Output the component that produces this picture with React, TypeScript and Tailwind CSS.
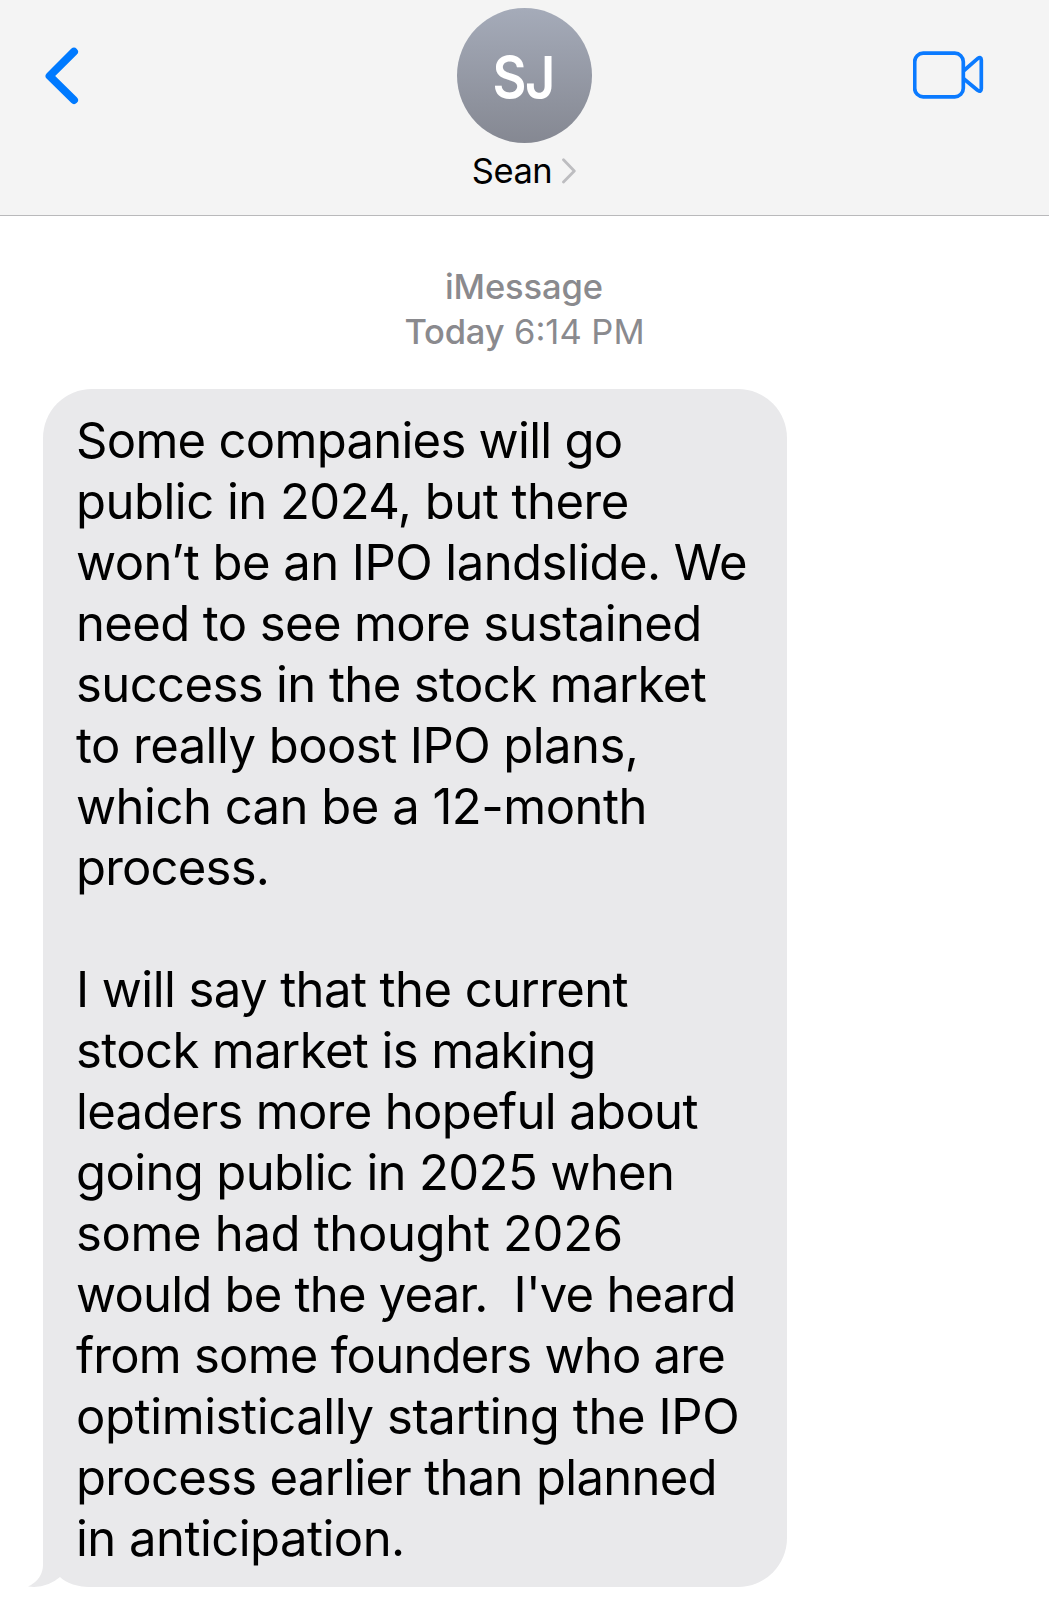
const paragraphs: { text: string; tracking: string }[][] = [
  [
    { text: 'Some companies will go', tracking: 'tracking-[-0.72px]' },
    { text: 'public in 2024, but there', tracking: 'tracking-[-0.51px]' },
    { text: 'won’t be an IPO landslide. We', tracking: 'tracking-[-0.55px]' },
    { text: 'need to see more sustained', tracking: 'tracking-[-0.61px]' },
    { text: 'success in the stock market', tracking: 'tracking-[-0.6px]' },
    { text: 'to really boost IPO plans,', tracking: 'tracking-[-0.55px]' },
    { text: 'which can be a 12-month', tracking: 'tracking-[-0.51px]' },
    { text: 'process.', tracking: 'tracking-[-0.8px]' },
  ],
  [
    { text: 'I will say that the current', tracking: 'tracking-[-0.57px]' },
    { text: 'stock market is making', tracking: 'tracking-[-0.6px]' },
    { text: 'leaders more hopeful about', tracking: 'tracking-[-0.66px]' },
    { text: 'going public in 2025 when', tracking: 'tracking-[-0.63px]' },
    { text: 'some had thought 2026', tracking: 'tracking-[-0.35px]' },
    { text: "would be the year.  I've heard", tracking: 'tracking-[-0.78px]' },
    { text: 'from some founders who are', tracking: 'tracking-[-0.77px]' },
    { text: 'optimistically starting the IPO', tracking: 'tracking-[-0.41px]' },
    { text: 'process earlier than planned', tracking: 'tracking-[-0.7px]' },
    { text: 'in anticipation.', tracking: 'tracking-[-0.53px]' },
  ],
];

function Header() {
  return (
    <header className="grid h-[216px] grid-cols-3 border-b border-[#b9b9bb] bg-[#f4f4f4]">
      <button className="ml-[45px] mt-[47px] h-[58px] w-[34px]" aria-label="Back">
        <svg viewBox="0 0 34 58" className="h-[58px] w-[34px]" fill="none" stroke="#007aff" strokeWidth="8">
          <path d="M29 4.7 4.6 29 29 53" strokeLinecap="round" strokeLinejoin="round" />
        </svg>
      </button>
      <div className="flex flex-col items-center pt-2">
        <div className="flex h-[134.5px] w-[134.5px] items-center justify-center rounded-full bg-linear-to-b from-[#a5abb9] to-[#858892]">
          <span className="mr-[3px] scale-x-[0.9] pt-[3px] text-[58px] font-semibold leading-none tracking-[-1.5px] text-white">SJ</span>
        </div>
        <div className="mr-[1px] mt-[8.5px] flex items-center gap-[10px]">
          <span className="text-[34.5px] leading-[40px] tracking-[-0.5px] text-black">Sean</span>
          <svg viewBox="0 0 14 26" className="h-[26px] w-[14px]" fill="none" stroke="#bdbdc0" strokeWidth="2.8">
            <path d="M1.5 1.8 12.3 13 1.5 24" strokeLinecap="round" strokeLinejoin="round" />
          </svg>
        </div>
      </div>
      <button className="mr-[65px] mt-[51px] h-[48px] w-[71px] justify-self-end" aria-label="Video call">
        <svg viewBox="0 0 71 48" className="h-[48px] w-[71px]" fill="none" stroke="#0a7aff" strokeWidth="3.7" strokeLinejoin="round">
          <rect x="1.7" y="2.2" width="48.6" height="43.6" rx="8.5" />
          <path d="M51 19.5 64.6 7.6Q68.3 5.2 68.3 9V37.5Q68.3 41.6 64.6 39.2L51 28" />
        </svg>
      </button>
    </header>
  );
}

export default function App() {
  return (
    <div className="min-h-[1600px] w-[1049px] overflow-hidden bg-white font-['Inter',sans-serif]">
      <Header />
      <main>
        <div className="flex flex-col items-center pt-[48px] text-[34.5px] leading-[45px] text-[#8a8a8e]">
          <p className="mr-[1px] font-medium tracking-[-0.1px]">iMessage</p>
          <p>
            <span className="font-medium tracking-[-0.2px]">Today</span> 6:14 PM
          </p>
        </div>
        <div className="relative ml-[43px] mt-[35px] h-[1198px] w-[744px] rounded-[49px] bg-[#e9e9eb] pl-[33px] pt-[22px]">
          <svg viewBox="0 0 80 70" className="absolute -left-[15px] bottom-0 h-[70px] w-[80px]">
            <path d="M15 0V45Q16 62 0 69.5Q18 72 32 60Q42 70 64 70H80V0Z" fill="#e9e9eb" />
          </svg>
          <div className="relative flex flex-col gap-[61px] text-[49px] leading-[60.98px] text-black">
            {paragraphs.map((lines, i) => (
              <p key={i}>
                {lines.map((line) => (
                  <span key={line.text} className={`block whitespace-pre ${line.tracking}`}>
                    {line.text}
                  </span>
                ))}
              </p>
            ))}
          </div>
        </div>
      </main>
    </div>
  );
}
